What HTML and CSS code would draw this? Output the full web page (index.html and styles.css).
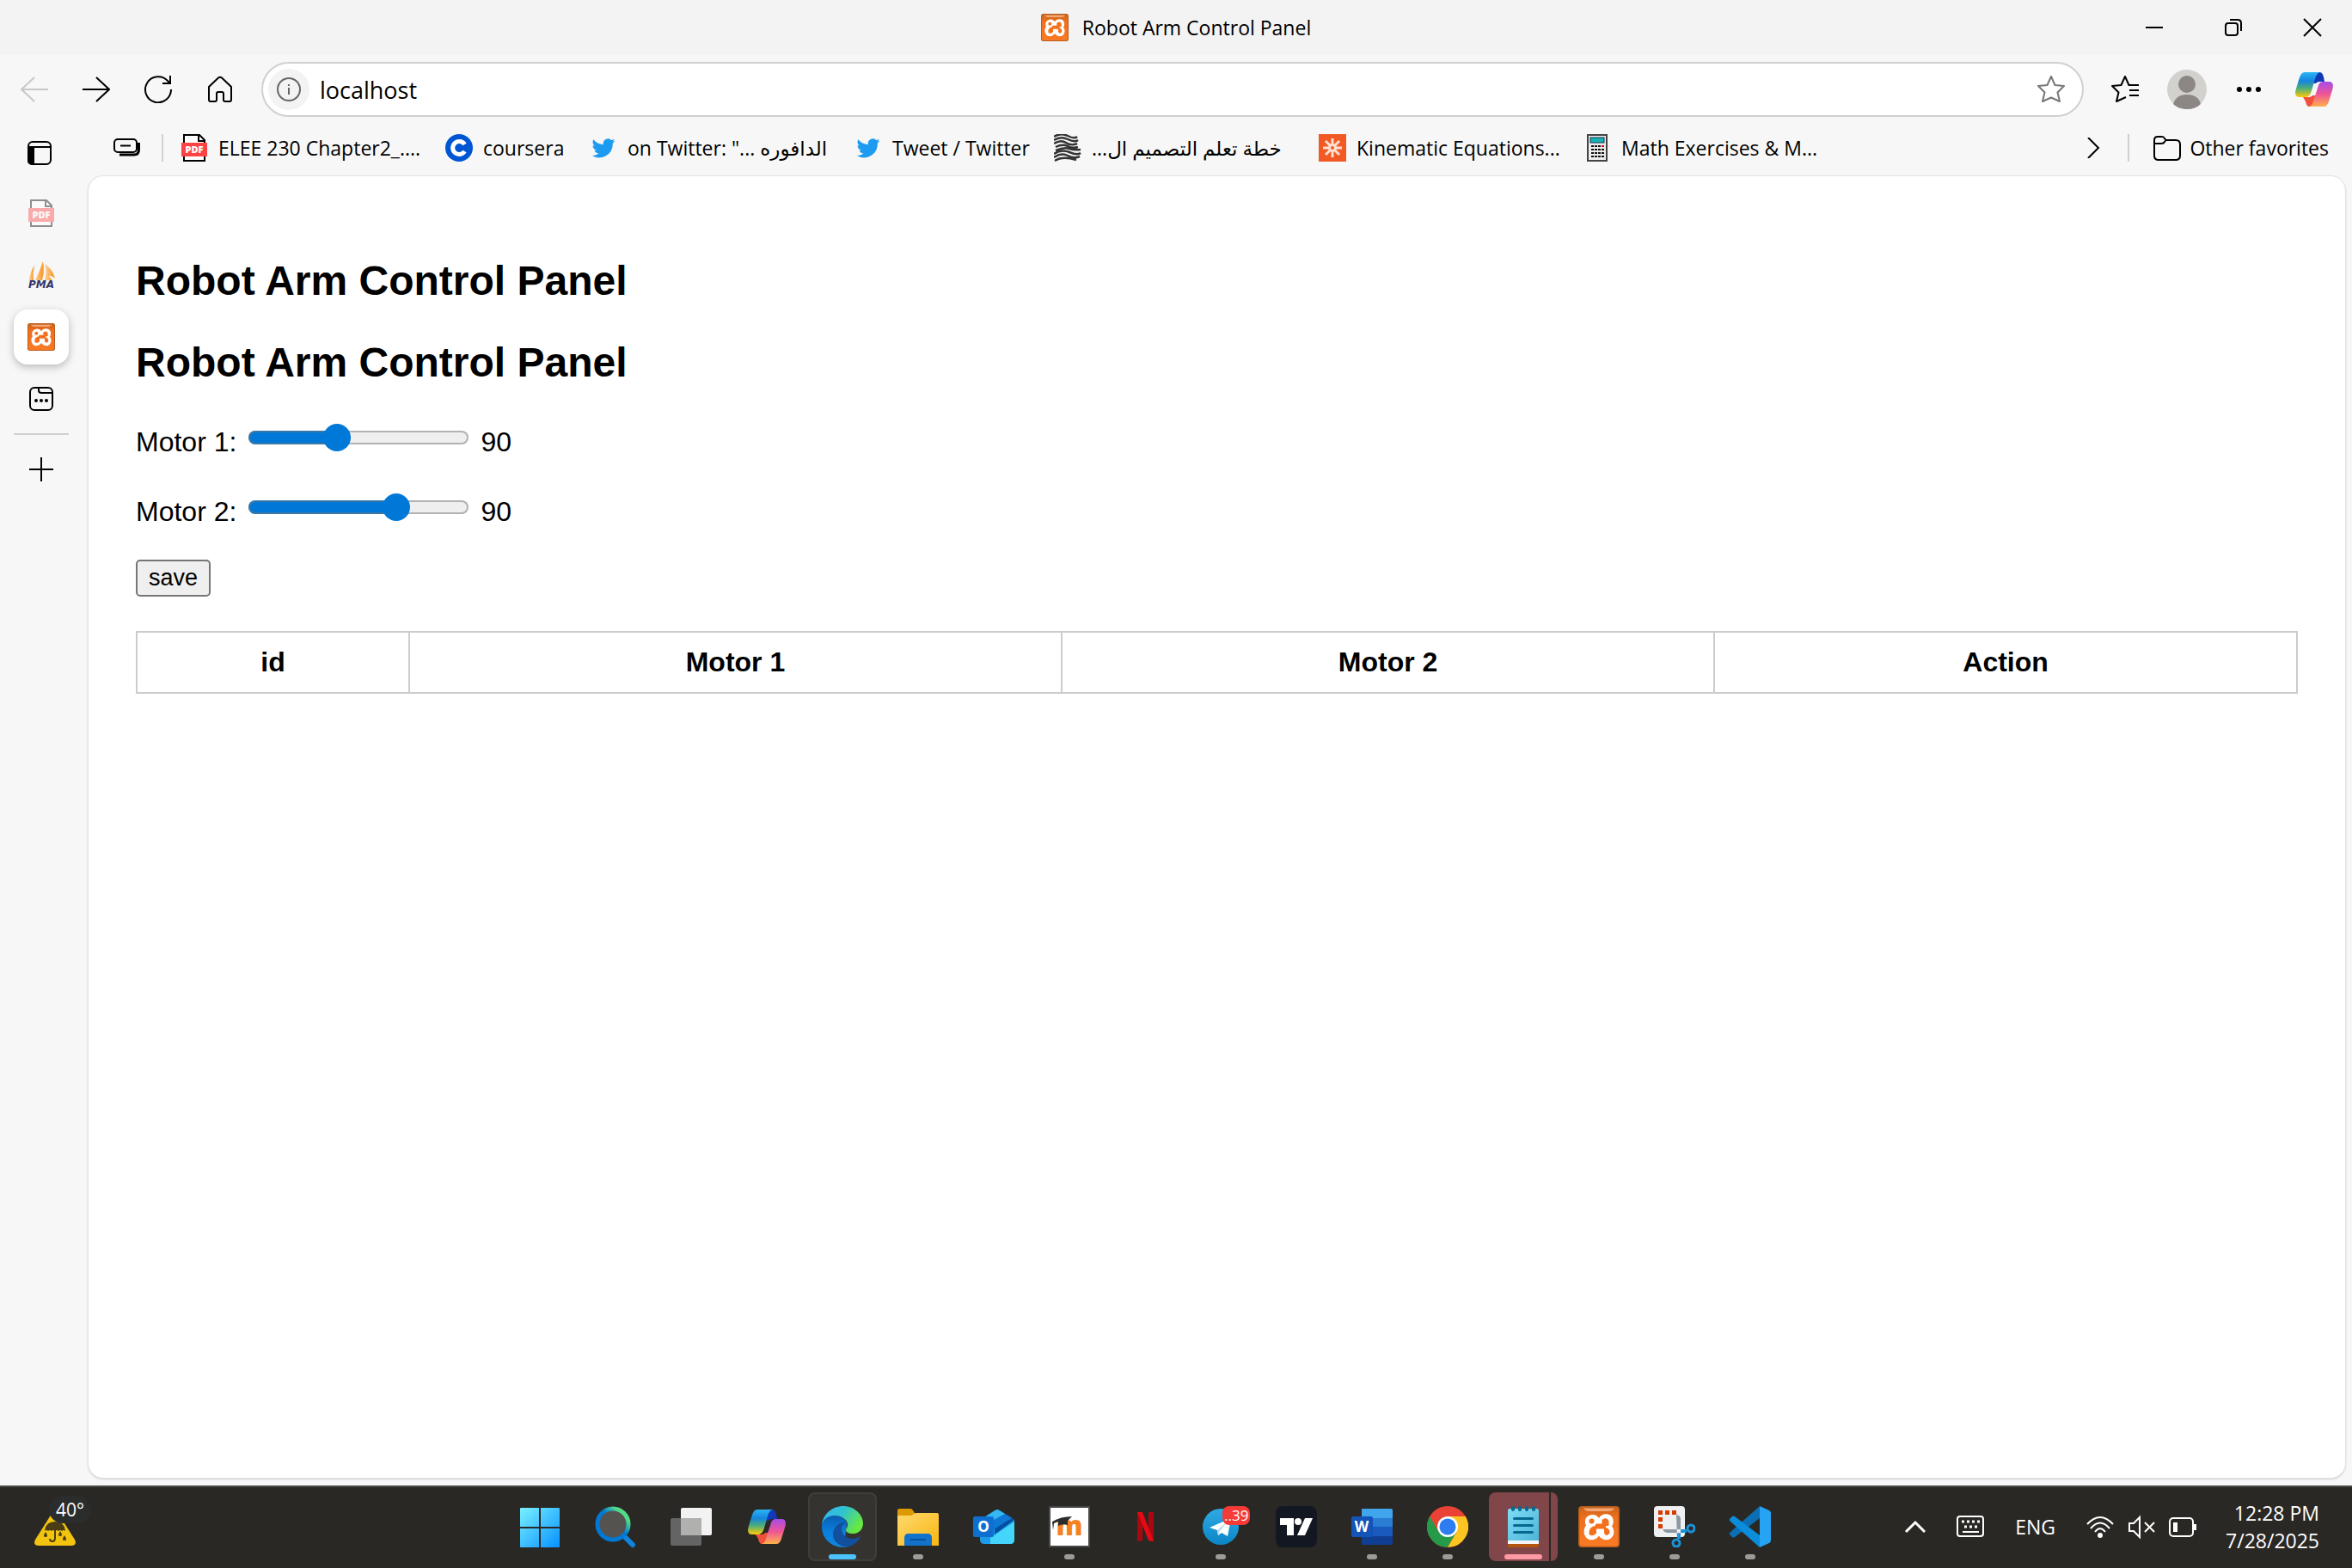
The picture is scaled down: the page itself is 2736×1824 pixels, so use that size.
FILE: index.html
```html
<!DOCTYPE html>
<html lang="en">
<head>
<meta charset="utf-8">
<title>Robot Arm Control Panel</title>
<link rel="stylesheet" href="styles.css">
</head>
<body>
<svg class="defs" aria-hidden="true">
  <defs>
    <linearGradient id="xg" x1="0" y1="0" x2="0" y2="1"><stop offset="0" stop-color="#c9651c"/><stop offset=".25" stop-color="#ee6f1d"/><stop offset="1" stop-color="#fb7a24"/></linearGradient>
    <linearGradient id="cpA" x1="0" y1="0" x2="0" y2="1"><stop offset="0" stop-color="#2cb4f5"/><stop offset=".35" stop-color="#1585dd"/><stop offset=".65" stop-color="#4fae78"/><stop offset="1" stop-color="#ffcb05"/></linearGradient>
    <linearGradient id="cpB" x1="0" y1="0" x2="0" y2="1"><stop offset="0" stop-color="#a84be8"/><stop offset=".5" stop-color="#ef5595"/><stop offset="1" stop-color="#ffb14d"/></linearGradient>
    <linearGradient id="win" x1="0" y1="0" x2="46" y2="46" gradientUnits="userSpaceOnUse"><stop offset="0" stop-color="#7df4ff"/><stop offset="1" stop-color="#0a94ff"/></linearGradient>
    <linearGradient id="srch" x1="0" y1="1" x2="1" y2="0"><stop offset=".55" stop-color="#0078d4"/><stop offset=".8" stop-color="#4fd98c"/><stop offset="1" stop-color="#5fe07a"/></linearGradient>
    <linearGradient id="edA" x1="0" y1="0" x2="1" y2=".5"><stop offset="0" stop-color="#36b4f8"/><stop offset=".5" stop-color="#2fc3d0"/><stop offset="1" stop-color="#66e940"/></linearGradient>
    <linearGradient id="edB" x1="0" y1="0" x2="0" y2="1"><stop offset="0" stop-color="#0a5cb0"/><stop offset=".5" stop-color="#0a7fdc"/><stop offset="1" stop-color="#1287e0"/></linearGradient>
    <linearGradient id="fold" x1="0" y1="0" x2="1" y2="1"><stop offset="0" stop-color="#ffd970"/><stop offset="1" stop-color="#f8b610"/></linearGradient>
    <linearGradient id="tg" x1="0" y1="0" x2="0" y2="1"><stop offset="0" stop-color="#2faae4"/><stop offset="1" stop-color="#0b86c6"/></linearGradient>
    <linearGradient id="np" x1="0" y1="0" x2="1" y2="1"><stop offset="0" stop-color="#7fdcf4"/><stop offset="1" stop-color="#4db5da"/></linearGradient>
    <linearGradient id="sail" x1="0" y1="0" x2="1" y2="0"><stop offset="0" stop-color="#fbd09a"/><stop offset="1" stop-color="#f8931d"/></linearGradient>
    <symbol id="xampp" viewBox="0 0 48 48">
      <rect width="48" height="48" rx="4" fill="#b95c1c"/><rect x="1.5" y="1.5" width="45" height="45" rx="3" fill="url(#xg)"/>
      <path d="M6 2.500H42Q40 6 34 6H14Q8 6 6 2.500Z" fill="#f3a878"/>
      <path d="M24 14C22 10.500 18.500 9.500 15.500 10C8 11 6.500 18 9 22.500C6 26 5.500 33 9.500 37C14 41 21 39.500 24 34.500C27 39.500 34 41 38.500 37C42.500 33 42 27 39 23.500C42 19 41 13 37 10.500C32 8 26.500 9.500 24 14Z" fill="#fff"/>
      <circle cx="15.500" cy="17.500" r="3" fill="#f4701c"/>
      <path d="M21 21.500H28.500V16.500Q33 13.500 34.500 17.500V22H31V31Q33 35 35.500 31Q36 27 31 25.500H20V31Q16 35 13.500 32Q13 25 20 24Z" fill="#f4701c" stroke="#f4701c" stroke-linejoin="round"/>
    </symbol>
    <symbol id="copilot" viewBox="0 0 44 40">
      <path d="M22 0H28C32 0 33 4 34 11H29C27 11 25 11.500 24 13H20Z" fill="#1238b8"/>
      <path d="M9 29H15C17 29 19 28.500 20 27H25L21 38C20 40 19 40 17 40C14 40 13 38 12 34Z" fill="#f1503a"/>
      <path d="M11 0H29C25.500 1 24 4 23 8L18.500 23C17 27 15 29 11 29H5C0 29 -1 25 1 19L5 6C6.500 2 8 0 11 0Z" fill="url(#cpA)"/>
      <path d="M33 40H16C19.500 39 20.500 36 21.500 32L26.500 17C27.500 13 29 11 33 11H39C44 11 45 15 43 21L39 34C37.500 38 36 40 33 40Z" fill="url(#cpB)"/>
    </symbol>
    <symbol id="pdf" viewBox="0 0 32 32">
      <path d="M5 2H21L27 8V30H5Z" fill="#fff"/><path d="M4 1H22L28 7V31H4ZM21 1V8H28" fill="none" stroke="#000" stroke-width="2"/>
      <rect x="1" y="10" width="30" height="16" fill="#fd4343"/><text x="16" y="22" text-anchor="middle" font-family="Open Sans, sans-serif" font-weight="800" font-size="11" fill="#fff">PDF</text>
    </symbol>
    <symbol id="bird" viewBox="0 0 24 24"><path fill="#1d9bf0" d="M23.600 5a9.500 9.500 0 0 1-2.700.8 4.800 4.800 0 0 0 2-2.600 9.500 9.500 0 0 1-3 1.100 4.800 4.800 0 0 0-8.100 4.400A13.600 13.600 0 0 1 2 3.700a4.800 4.800 0 0 0 1.500 6.400 4.700 4.700 0 0 1-2.200-.6 4.800 4.800 0 0 0 3.800 4.700 4.800 4.800 0 0 1-2.100.1 4.800 4.800 0 0 0 4.400 3.300A9.600 9.600 0 0 1 .3 19.600 13.600 13.600 0 0 0 21.200 7.500 9.700 9.700 0 0 0 23.600 5Z"/></symbol>
  </defs>
</svg>

<div class="desktop">
  <div class="window">
    <header class="titlebar">
      <div class="title"><svg class="i32"><use href="#xampp"/></svg><span>Robot Arm Control Panel</span></div>
      <div class="controls">
        <button aria-label="Minimize"><svg class="i20" viewBox="0 0 20 20"><path d="M0 10H20"/></svg></button>
        <button aria-label="Restore"><svg class="i20" viewBox="0 0 20 20"><rect x="1" y="5" width="14" height="14" rx="3"/><path d="M6 1H15Q19 1 19 5V14"/></svg></button>
        <button aria-label="Close"><svg class="i20" viewBox="0 0 20 20"><path d="M0 0L20 20M20 0L0 20"/></svg></button>
      </div>
    </header>

    <nav class="toolbar">
      <button class="tool off" aria-label="Back"><svg class="i32" viewBox="0 0 32 32"><path d="M32 16H1M16 2L1 16L16 30"/></svg></button>
      <button class="tool" aria-label="Forward"><svg class="i32" viewBox="0 0 32 32"><path d="M0 16H31M16 2L31 16L16 30"/></svg></button>
      <button class="tool" aria-label="Refresh"><svg class="i32" viewBox="0 0 32 32"><path d="M31 16A15 15 0 1 1 27 6L30 9M30 0V9H21"/></svg></button>
      <button class="tool" aria-label="Home"><svg class="i32" viewBox="0 0 32 32"><path d="M3 13L14 2.500Q16 1 18 2.500L29 13V28Q29 30 27 30H22Q20 30 20 28V21Q20 19 18 19H14Q12 19 12 21V28Q12 30 10 30H5Q3 30 3 28Z"/></svg></button>
      <div class="address">
        <button class="info" aria-label="Site information"><svg viewBox="0 0 28 28"><circle cx="14" cy="14" r="13"/><path d="M14 12V20M14 8V10"/></svg></button>
        <input type="text" value="localhost" aria-label="Address">
        <button class="star" aria-label="Add to favorites"><svg class="i32" viewBox="0 0 32 32"><path stroke-linejoin="round" d="M16 1L20.500 11L31 12L23.500 19.500L26 30L16 25.500L6 30L8.500 19.500L1 12L11.500 11Z"/></svg></button>
      </div>
      <button class="tool" aria-label="Favorites"><svg class="i32" viewBox="0 0 32 32"><path stroke-linejoin="round" d="M32 11H20.500L16 1L11.500 11L1 12L8.500 19.500L6 30L17 25M21 17H32M21 23H32"/></svg></button>
      <button class="tool" aria-label="Profile"><svg class="i46" viewBox="0 0 46 46"><circle cx="23" cy="23" r="23" fill="#d3d1ce" stroke="none"/><circle cx="23" cy="17" r="10" fill="#8c8784" stroke="none"/><path d="M7 40Q10 29 23 29T39 40Q33 46 23 46T7 40Z" fill="#8c8784" stroke="none"/></svg></button>
      <button class="tool" aria-label="Settings and more"><svg class="i32" viewBox="0 0 32 32"><g class="solid" stroke="none"><circle cx="5" cy="16" r="3"/><circle cx="16" cy="16" r="3"/><circle cx="27" cy="16" r="3"/></g></svg></button>
      <button class="tool copilot" aria-label="Copilot"><svg><use href="#copilot"/></svg></button>
    </nav>

    <div class="workspace">
      <aside class="sidebar">
        <button class="first" aria-label="Tab actions"><svg class="i28" viewBox="0 0 28 28"><rect x="1" y="1" width="26" height="26" rx="5"/><path d="M1 7H27"/><path class="solid" d="M1 7H7V27H5Q1 26 1 23Z"/></svg></button>
        <button class="asleep" aria-label="PDF tab"><svg class="i32"><use href="#pdf"/></svg></button>
        <button aria-label="phpMyAdmin tab"><svg class="i32 sails" viewBox="0 0 32 32"><g stroke="none" fill="url(#sail)"><path d="M2 22Q3 12 8 5Q6 14 7 22Z"/><path d="M9 22Q14 12 18 0Q20 12 17 22Z"/><path d="M20 3Q30 10 32 20Q27 16 25 17L29 22H20Q23 12 20 3Z"/></g><text x="16" y="31" text-anchor="middle" font-family="DejaVu Sans, sans-serif" font-size="12" font-style="oblique" font-weight="bold" fill="#33366b" stroke="none">PMA</text></svg></button>
        <button class="current" aria-label="Robot Arm Control Panel tab"><svg class="i32"><use href="#xampp"/></svg></button>
        <button aria-label="New tab page"><svg class="i28" viewBox="0 0 28 28"><rect x="1" y="1" width="26" height="26" rx="5"/><path d="M11 1V4Q11 7 14 7H27"/><g class="solid"><circle cx="8" cy="16" r="1"/><circle cx="14" cy="16" r="1"/><circle cx="20" cy="16" r="1"/></g></svg></button>
        <hr>
        <button aria-label="New tab"><svg class="i28" viewBox="0 0 28 28"><path d="M14 0V28M0 14H28"/></svg></button>
      </aside>

      <div class="view">
        <nav class="favorites">
          <button class="fav lead" aria-label="Workspaces"><svg class="i32" viewBox="0 0 32 32"><rect x="1" y="6" width="26" height="15" rx="4"/><path d="M8 13.500H20"/><path stroke-width="3" d="M29.500 10V18Q29.500 24 24 24H7"/></svg></button>
          <span class="rule"></span>
          <a class="fav long" href="#"><svg class="i32"><use href="#pdf"/></svg><span>ELEE 230 Chapter2_....</span></a>
          <a class="fav short" href="#"><svg class="i32" viewBox="0 0 32 32"><circle cx="16" cy="16" r="16" fill="#0056d2" stroke="none"/><path d="M22.500 12A7.500 7.500 0 1 0 22.500 20" stroke="#fff" stroke-width="5"/></svg><span>coursera</span></a>
          <a class="fav long" href="#"><svg class="i32 small"><use href="#bird"/></svg><span class="rtl">on Twitter: "... الدافوره</span></a>
          <a class="fav mid" href="#"><svg class="i32 small"><use href="#bird"/></svg><span>Tweet / Twitter</span></a>
          <a class="fav long" href="#"><svg class="i32" viewBox="0 0 32 32"><path d="M0 3Q8 -2 16 2T27 3M0 7Q8 2 16 6T28 7M0 11Q8 6 14 10T27 11M2 15Q10 11 16 14T28 15M2 19Q12 15 18 17T31 18M0 23Q9 17 18 21T31 22M0 27Q9 21 16 25T30 26M1 31Q10 25 26 30" stroke="#333" stroke-width="2.500"/></svg><span dir="rtl">خطة تعلم التصميم ال...</span></a>
          <a class="fav long" href="#"><svg class="i32" viewBox="0 0 32 32"><rect width="32" height="32" fill="#f15a24" stroke="none"/><path d="M16 5V27M5 16H27M8 8L24 24M24 8L8 24" stroke="#fde0d2" stroke-width="3"/><circle cx="16" cy="16" r="5" fill="#fde0d2" stroke="none"/><circle cx="16" cy="16" r="2" fill="#f15a24" stroke="none"/></svg><span>Kinematic Equations...</span></a>
          <a class="fav long" href="#"><svg class="i32" viewBox="0 0 32 32"><rect x="5" y="1" width="22" height="30" fill="#eee" stroke="#444"/><rect x="8" y="4" width="16" height="6" fill="#18b4b4" stroke="#135" stroke-width="1"/><path d="M9 14H24M9 18H24M9 22H24M9 26H24" stroke="#111" stroke-width="2" stroke-dasharray="3 1"/><path d="M21 14H24" stroke="#d02"/></svg><span>Math Exercises &amp; M...</span></a>
          <button class="fav more" aria-label="More favorites"><svg class="i24" viewBox="0 0 24 24"><path d="M6 0L18 12L6 24"/></svg></button>
          <span class="rule"></span>
          <a class="fav other" href="#"><svg class="i32" viewBox="0 0 32 32"><path d="M1 25V7Q1 3 5 3H10Q12 3 13 5L14.500 7H26Q31 7 31 12V25Q31 30 26 30H6Q1 30 1 25ZM1 11H9Q12 11 13 9L14.500 7"/></svg><span>Other favorites</span></a>
        </nav>

        <main class="page">
          <h2>Robot Arm Control Panel</h2>
          <h2>Robot Arm Control Panel</h2>
          <form>
            <div class="motor"><label for="m1">Motor 1:</label><input id="m1" type="range" min="0" max="180" value="70" style="--at: 40%"><output for="m1">90</output></div>
            <div class="motor"><label for="m2">Motor 2:</label><input id="m2" type="range" min="0" max="180" value="125" style="--at: 67%"><output for="m2">90</output></div>
            <button class="save" type="button">save</button>
          </form>
          <table>
            <thead><tr><th>id</th><th>Motor 1</th><th>Motor 2</th><th>Action</th></tr></thead>
          </table>
        </main>
      </div>
    </div>
  </div>

  <footer class="taskbar">
    <button class="weather" aria-label="Weather">
      <svg viewBox="0 0 48 40"><path d="M20 3Q24 -3 28 3L47 33Q50 40 43 40H5Q-2 40 1 33Z" fill="#f2c40f"/><path d="M12 23Q13 12 24 12T36 23Q34 21 32 23Q30 21 28 23Q26 21 24 23Q22 21 20 23Q18 21 16 23Q14 21 12 23Z" fill="#4a3c14"/><path d="M24 22V31Q24 35 21 35T18 32" stroke="#4a3c14" stroke-width="2" fill="none"/><g fill="#4a3c14"><path d="M13 24Q17 30 13 30T13 24ZM30 23Q34 29 30 29T30 23ZM35 28Q39 34 35 34T35 28Z"/></g></svg>
      <span>40°</span>
    </button>
    <div class="apps">
      <button aria-label="Start"><svg viewBox="0 0 48 48"><path fill="url(#win)" d="M1 3Q1 2 2 2H23V24H1ZM25 2H46Q47 2 47 3V24H25ZM1 26H23V48H2Q1 48 1 47ZM25 26H47V47Q47 48 46 48H25Z"/></svg></button>
      <button aria-label="Search"><svg viewBox="0 0 48 48"><path d="M35 36L44 45" stroke="#0f84dc" stroke-width="6" stroke-linecap="round"/><circle cx="21" cy="21" r="18" fill="#55534f" stroke="url(#srch)" stroke-width="5"/></svg></button>
      <button aria-label="Task view"><svg viewBox="0 0 48 48"><rect x="12" y="2" width="36" height="32" rx="2" fill="#f2f2f2"/><rect y="14" width="36" height="32" rx="2" fill="#646464"/><path d="M12 14H36V34H12Z" fill="#b0b0af"/></svg></button>
      <button aria-label="Copilot"><svg viewBox="0 0 48 48"><use href="#copilot" x="2" y="4" width="44" height="40"/></svg></button>
      <button class="active" aria-label="Edge"><svg viewBox="0 0 48 48"><path d="M0 21C2 14 8 11 15 11C23 11 29 16 29 20L26 46L30 47.500C12 50 0 38 0 24Z" fill="url(#edB)"/><path d="M29 19C22 17 13 24 13 33C13 41 20 47 30 47.500C37 46 42 41 44.500 37C44.500 36 44 35.500 43 36C36 40 24 38 23 27C23 23 25 20 29 19Z" fill="#124f9c"/><path d="M0 21C2 9 12 0 25 0C38 0 48 10 48 20C48 28 42 32 36 32C31 32 28 30 28 28C28 26 30 25 30 21C30 16 23 11 15 11C8 11 2 15 0 21Z" fill="url(#edA)"/></svg></button>
      <button class="open" aria-label="File Explorer"><svg viewBox="0 0 48 48"><path d="M0 5Q0 3 2 3H15Q17 3 18 5L20 8V14H0Z" fill="#dc9a04"/><path d="M0 11H16L21 8H46Q48 8 48 10V46H0Z" fill="url(#fold)"/><path d="M8 46V37Q8 32 13 32H35Q40 32 40 37V46Z" fill="#1272cc"/><path d="M15 39H33" stroke="#0b4f9a" stroke-width="2"/></svg></button>
      <button aria-label="Outlook"><svg viewBox="0 0 48 48"><path d="M8 16L25 5Q28 3 31 5L48 16V39Q48 44 43 44H13Q8 44 8 39Z" fill="#1c9ae6"/><path d="M10 15L28 4L37 9L18 20Z" fill="#35b8f1"/><path d="M25 20L40 10L48 16L25 33Z" fill="#0350a2"/><path d="M24 16L37 9L45 14L24 27Z" fill="#0f78d4"/><path d="M20 37L48 18V39Q48 44 43 44H20Z" fill="#43d5fa"/><rect y="12" width="24" height="24" rx="2" fill="#0f6fd1"/><text x="12" y="30" text-anchor="middle" font-family="Open Sans, sans-serif" font-size="17" font-weight="700" fill="#fff">O</text></svg></button>
      <button class="open" aria-label="Moodle"><svg viewBox="0 0 48 48"><rect width="48" height="48" fill="#464747"/><rect x="2" y="2" width="44" height="44" fill="#fff"/><text x="24" y="34" text-anchor="middle" font-family="Open Sans, sans-serif" font-size="31" font-weight="800" fill="#f58220">m</text><path d="M4 18Q14 12 27 12L22 17V22Q16 20 11 23V18L6 20L5 28Z" fill="#2c2c2c"/></svg></button>
      <button aria-label="Netflix"><svg viewBox="0 0 48 48"><path d="M15 7H21V40L15 41ZM28 7H34V41L28 40Z" fill="#ab070f"/><path d="M15 7H21L34 41L28 40Z" fill="#e50914"/></svg></button>
      <button class="open" aria-label="Telegram"><svg viewBox="0 0 48 48"><circle cx="24" cy="24" r="21" fill="url(#tg)"/><path d="M11 25L36 14L32 35L25 31L21 34L20 28Z" fill="#fff"/><path d="M20 28L32 18L23 29L21 34Z" fill="#b9d9ec"/></svg><span class="badge">..39</span></button>
      <button aria-label="TradingView"><svg viewBox="0 0 48 48"><rect width="48" height="48" rx="8" fill="#131722"/><path d="M5 14H21V34H13V22H5ZM34 14H43L34 34H25Z" fill="#fff"/><circle cx="26" cy="18" r="4" fill="#fff"/></svg></button>
      <button class="open" aria-label="Word"><svg viewBox="0 0 48 48"><path d="M12 3H46Q48 3 48 5V14H12Z" fill="#41a5ee"/><path d="M12 14H48V24H12Z" fill="#2b7cd3"/><path d="M12 24H48V35H12Z" fill="#185abd"/><path d="M12 35H48V43Q48 45 46 45H12Z" fill="#103f91"/><rect y="12" width="25" height="24" rx="2" fill="#1453b8"/><text x="12" y="30" text-anchor="middle" font-family="Open Sans, sans-serif" font-size="17" font-weight="700" fill="#fff">W</text></svg></button>
      <button class="open" aria-label="Chrome"><svg viewBox="0 0 48 48"><circle cx="24" cy="24" r="24" fill="#ea4335"/><path d="M3.200 12A24 24 0 0 0 24 48L34.400 30L13.600 30Z" fill="#259a48"/><path d="M24 48A24 24 0 0 0 44.800 12H24L34.400 30Z" fill="#fcc521"/><circle cx="24" cy="24" r="12" fill="#fff"/><circle cx="24" cy="24" r="9.500" fill="#2d7df0"/></svg></button>
      <button class="alert" aria-label="Notepad"><svg viewBox="0 0 48 48"><path d="M6 40H42V46Q42 48 40 48H8Q6 48 6 46Z" fill="#b4560f"/><path d="M6 38H42V44H6Z" fill="#f4f4f4"/><path d="M6 5Q6 3 8 3H40Q42 3 42 5V40H6Z" fill="url(#np)"/><path d="M12 2V4M20 2V4M28 2V4M36 2V4" stroke="#06698f" stroke-width="4" stroke-linecap="round"/><path d="M13.500 14.500H34.500M13.500 22.500H34.500M13.500 30.500H34.500" stroke="#06698f" stroke-width="3" stroke-linecap="round"/></svg></button>
      <button class="open" aria-label="XAMPP"><svg><use href="#xampp"/></svg></button>
      <button class="open" aria-label="Snipping Tool"><svg viewBox="0 0 48 48"><rect width="36" height="36" rx="4" fill="#eef0f2"/><path d="M5 5H10V10H5ZM13 5H18V10H13ZM21 5H26V10H21ZM5 13H10V18H5ZM5 21H10V26H5Z" fill="#d83b01"/><path d="M26 10Q31 11 31 15V37H27ZM10 27Q12 31 16 31H38V27Z" fill="#8d98a3"/><path d="M31 29H38M29 32V38" stroke="#1b93dc" stroke-width="4"/><circle cx="43" cy="26" r="4" fill="none" stroke="#1b93dc" stroke-width="3"/><circle cx="26" cy="43" r="4" fill="none" stroke="#1b93dc" stroke-width="3"/></svg></button>
      <button class="open" aria-label="Visual Studio Code"><svg viewBox="0 0 48 48"><path d="M35 0V14L6 36Q4 37 3 36L0 33V31Z" fill="#0a6fb5"/><path d="M0 15L3 12Q4 11 6 12L35 34V48L0 17Z" fill="#0c8ddb"/><path d="M35 0L46 5Q48 6 48 8V40Q48 42 46 43L35 48Z" fill="#26a3f2"/></svg></button>
    </div>
    <div class="tray">
      <button aria-label="Hidden icons"><svg class="i24" viewBox="0 0 24 24"><path d="M1 18L12 7L23 18" stroke-width="3"/></svg></button>
      <button aria-label="Touch keyboard"><svg class="i32" viewBox="0 0 32 32"><rect x="1" y="4" width="30" height="23" rx="3"/><path d="M6 10H27M9 16H24" stroke-width="3" stroke-dasharray="3 3"/><path d="M7 22H26"/></svg></button>
      <button class="lang">ENG</button>
      <button class="status" aria-label="Network, volume and battery">
        <svg class="i32" viewBox="0 0 32 32"><path d="M1 13Q16 -3 31 13M5 18Q16 5 27 18M10 22Q16 14 22 22"/><circle class="solid" cx="16" cy="26" r="2"/></svg>
        <svg class="i32" viewBox="0 0 32 32"><path d="M2 12H7L14 5V28L7 21H2ZM20 11L31 22M31 11L20 22"/></svg>
        <svg class="i32" viewBox="0 0 32 32"><rect x="1" y="6" width="27" height="21" rx="4"/><path class="solid" d="M6 12H9V21H6ZM29 14H31V19H29Z"/></svg>
      </button>
      <button class="clock"><time>12:28 PM</time><time>7/28/2025</time></button>
    </div>
  </footer>
</div>
</body>
</html>
```
FILE: styles.css
```css
* { box-sizing: border-box; }
body { margin: 0; font-family: "Open Sans", "Noto Sans", "DejaVu Sans", sans-serif; font-size: 23px; color: #000; background: #f7f7f7; }
button { font: inherit; color: inherit; background: none; border: 0; padding: 0; display: flex; align-items: center; justify-content: center; }
a { color: inherit; text-decoration: none; }
svg { display: block; flex: none; fill: none; stroke: currentColor; stroke-width: 2; }
symbol, use { stroke: none; }
.solid { fill: currentColor; }
.defs { position: absolute; width: 0; height: 0; }
.i20 { width: 20px; height: 20px; overflow: visible; }
.i24 { width: 24px; height: 24px; }
.i28 { width: 28px; height: 28px; }
.i32 { width: 32px; height: 32px; }
.i46 { width: 46px; height: 46px; }

.desktop { min-height: 100vh; display: flex; flex-direction: column; }
.window { flex: 1; display: flex; flex-direction: column; }

.titlebar { height: 64px; background: #f3f3f3; display: grid; grid-template-columns: 1fr auto 1fr; align-items: center; }
.title { grid-column: 2; display: flex; align-items: center; gap: 16px; }
.controls { justify-self: end; display: flex; }
.controls button { width: 92px; height: 64px; }

.toolbar { height: 72px; padding: 8px 4px 0 4px; display: flex; align-items: center; }
.tool { width: 72px; height: 64px; }
.off { color: #c8c8c8; }
.address { flex: 1; height: 64px; margin: 0 12px; padding: 0 20px 0 6px; border: 2px solid #d0d0d0; border-radius: 32px; background: #fff; display: flex; align-items: center; }
.info { width: 48px; height: 48px; border-radius: 24px; background: #f3f3f3; color: #666; }
.info svg { width: 28px; height: 28px; }
.address input { flex: 1; min-width: 0; margin-left: 12px; padding: 0; border: 0; outline: 0; background: none; font: inherit; font-size: 27px; color: #000; }
.star { color: #777; }
.copilot { width: 80px; }
.copilot svg { width: 44px; height: 40px; }

.workspace { flex: 1; display: grid; grid-template-columns: 102px 1fr; }
.sidebar { padding: 12px 22px 0 16px; display: flex; flex-direction: column; gap: 8px; }
.sidebar button { width: 64px; height: 64px; border-radius: 16px; }
.sidebar .first { height: 60px; padding-right: 4px; }
.sails { overflow: visible; }
.asleep { opacity: .42; }
.current { background: #fff; box-shadow: 0 3px 10px rgba(0, 0, 0, .25); }
.sidebar hr { width: 64px; margin: 0; border: 0; border-top: 2px solid #d0d0d0; }

.view { min-width: 0; display: flex; flex-direction: column; padding: 0 7px 8px 0; }
.favorites { height: 68px; padding: 4px 20px 0 30px; display: flex; align-items: center; gap: 32px; }
.fav { display: flex; align-items: center; gap: 12px; white-space: nowrap; }
.fav.long { width: 276px; }
.fav.mid { width: 200px; }
.fav.short { width: 136px; }
.fav .rtl { flex: 1; text-align: right; }
.small { padding: 2px; }
.rule { width: 2px; height: 32px; background: #d0d0d0; }
.lead { margin-right: -8px; }
.lead + .rule { margin-right: -12px; }
.more { margin-left: auto; }
.more + .rule, .more { margin-right: -4px; }
.other { gap: 10px; }

.page { flex: 1; padding: 94px 55px 55px; background: #fff; border: 1px solid #e2e2e2; border-radius: 18px; box-shadow: 0 1px 2px rgba(0, 0, 0, .15); font-family: "Liberation Sans", Arial, sans-serif; font-size: 32px; }
h2 { margin: 0 0 40px; font-size: 48px; line-height: 55px; }
form { padding-top: 4px; }
.motor { display: flex; gap: 14px; line-height: 43px; margin-bottom: 38px; }
input[type=range] { appearance: none; width: 256px; height: 32px; margin: 0; background: none; }
input[type=range]::-webkit-slider-runnable-track { height: 16px; border-radius: 8px; background: linear-gradient(to right, #0078d7 var(--at), #efefef var(--at)); box-shadow: inset 0 0 0 2px rgba(118, 118, 118, .5); }
input[type=range]::-webkit-slider-thumb { appearance: none; width: 32px; height: 32px; margin-top: -8px; border-radius: 50%; background: #0078d7; }
.save { height: 43px; margin-top: -4px; padding: 0 13px; border: 2px solid #767676; border-radius: 5px; background: #efefef; font-size: 27px; }
table { width: 100%; margin-top: 40px; border-collapse: collapse; }
th { padding: 16px; border: 2px solid #ccc; line-height: 37px; }

.taskbar { height: 96px; padding-bottom: 2px; border-top: 2px solid #4a4a48; background: #2a2824; color: #fff; display: grid; grid-template-columns: 1fr auto 1fr; align-items: center; }
.taskbar svg { stroke: none; }
.weather { position: relative; justify-self: start; width: 48px; margin: 4px 0 0 40px; }
.weather svg { width: 48px; height: 40px; }
.weather span { position: absolute; left: 17px; top: -18px; padding: 0 8px; border-radius: 16px; background: #2b2d2d; font-size: 21px; line-height: 32px; }
.apps { display: flex; gap: 8px; margin-right: 72px; }
.apps button { position: relative; width: 80px; height: 80px; border-radius: 8px; }
.apps svg { width: 48px; height: 48px; }
.active { background: #35332f; box-shadow: inset 0 0 0 2px #403e3a; }
.alert { background: linear-gradient(to right, #80464a 70px, #2a2824 70px, #2a2824 72px, #80464a 72px); }
.open::after, .active::after, .alert::after { content: ""; position: absolute; bottom: 2px; left: 34px; width: 12px; height: 6px; border-radius: 3px; background: #9c9b99; }
.active::after { left: 24px; width: 32px; background: #4cc2ff; }
.alert::after { left: 18px; width: 44px; background: #ff99a4; }
.badge { position: absolute; left: 42px; top: 16px; padding: 0 2px; border-radius: 8px; background: #f53b38; font-size: 17px; line-height: 22px; }
.tray { justify-self: end; display: flex; align-items: center; padding-right: 38px; }
.tray svg { stroke: currentColor; }
.tray .i32 { margin-left: 36px; }
.lang { margin-left: 36px; }
.status .i32 { margin-left: 16px; }
.status { margin-left: 20px; }
.clock { flex-direction: column; align-items: flex-end; margin-left: 34px; line-height: 32px; }
```
